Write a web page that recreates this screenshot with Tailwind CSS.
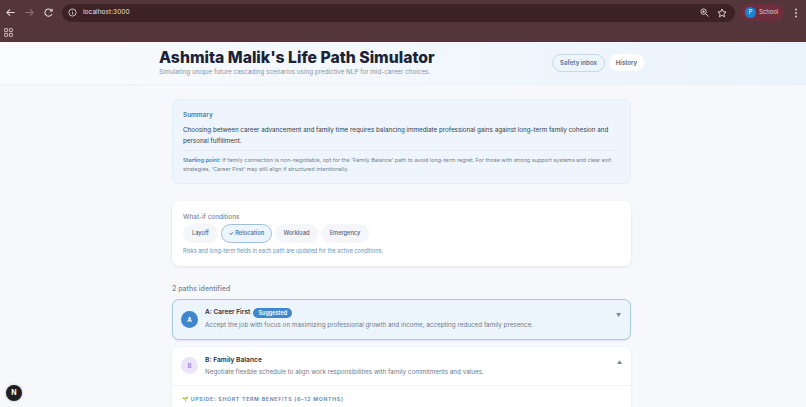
<!DOCTYPE html>
<html lang="en">
<head>
    <meta charset="UTF-8">
    <meta name="viewport" content="width=device-width, initial-scale=1.0">
    <title>Life Path Simulator</title>
    <script src="https://cdn.jsdelivr.net/npm/@tailwindcss/browser@4"></script>
</head>
<body class="w-[806px] h-[407px] overflow-hidden bg-[#f6f8fb] font-['Inter',sans-serif] relative">
    <!-- browser chrome -->
    <div class="h-[42px] bg-[#54363a] flex flex-col">
        <div class="h-[25px] flex items-center">
            <div class="w-[62px] pl-[5px] flex items-center gap-[8px] shrink-0">
                <svg class="w-[11px] h-[11px]" viewBox="0 0 12 12" fill="none" stroke="#e8dcdd" stroke-width="1.1"><path d="M10.5 6H2M5.5 2.5 2 6l3.500 3.500"/></svg>
                <svg class="w-[11px] h-[11px]" viewBox="0 0 12 12" fill="none" stroke="#8d7477" stroke-width="1.1"><path d="M1.500 6H10M6.500 2.500 10 6l-3.500 3.500"/></svg>
                <svg class="w-[11px] h-[11px]" viewBox="0 0 12 12" fill="none" stroke="#e8dcdd" stroke-width="1.1"><path d="M9.800 7.500A4 4 0 1 1 9.500 4M10 1.800V4.300H7.500"/></svg>
            </div>
            <div class="w-[673px] h-[18px] rounded-full bg-[#3d2225] flex items-center shrink-0 pl-[5px] pr-[8px]">
                <svg class="w-[9px] h-[9px] ml-[1px]" viewBox="0 0 10 10" fill="none" stroke="#e8dcdd" stroke-width=".9"><circle cx="5" cy="5" r="4"/><path d="M5 4.500V7.200M5 2.800v.8"/></svg>
                <span class="ml-[6px] text-[6.600px] text-[#e8dcdd]">localhost:3000</span>
                <svg class="w-[9px] h-[9px] ml-auto" viewBox="0 0 10 10" fill="none" stroke="#e8dcdd" stroke-width="1"><circle cx="4" cy="4" r="3"/><path d="M6.200 6.200 9.500 9.500M2.600 4h2.800M4 2.600v2.800"/></svg>
                <svg class="w-[10px] h-[10px] ml-[8px]" viewBox="0 0 10 10" fill="none" stroke="#e8dcdd" stroke-width=".9"><path d="m5 1 1.200 2.700 2.900.3-2.200 1.900.7 2.900L5 7.300 2.400 8.800l.7-2.900L.9 4l2.900-.3z"/></svg>
            </div>
            <div class="ml-[5px] w-[44px] h-[17px] rounded-full bg-[#6f2e3d] flex items-center pl-[5px] gap-[3px] shrink-0">
                <span class="w-[11px] h-[11px] rounded-full bg-[#1b82cf] text-white text-[5.500px] flex items-center justify-center">P</span>
                <span class="text-[5.900px] text-[#e3d3d6]">School</span>
            </div>
            <svg class="w-[8px] h-[10px] ml-[8px] shrink-0" viewBox="0 0 8 10" fill="#e8dcdd"><circle cx="4" cy="1.500" r=".9"/><circle cx="4" cy="5" r=".9"/><circle cx="4" cy="8.500" r=".9"/></svg>
        </div>
        <div class="pl-[4px] pt-[3px]">
            <svg class="w-[9px] h-[9px]" viewBox="0 0 9 9" fill="none" stroke="#d9c9cb" stroke-width=".9"><rect x=".6" y=".6" width="3" height="3" rx=".5"/><rect x="5.400" y=".6" width="3" height="3" rx=".5"/><rect x=".6" y="5.400" width="3" height="3" rx=".5"/><rect x="5.400" y="5.400" width="3" height="3" rx=".5"/></svg>
        </div>
    </div>

    <!-- page header -->
    <header class="h-[43px] bg-gradient-to-r from-[#fafbfd] to-[#eaf3fc] border-b border-[#edf0f5] flex items-center pl-[159px] pr-[162px] justify-between">
        <div class="-mt-[2px]">
            <h1 class="font-extrabold text-[15.750px] leading-[20px] text-[#1b2336]">Ashmita Malik's Life Path Simulator</h1>
            <p class="text-[6.320px] leading-[9px] text-[#8a93a3]">Simulating unique future cascading scenarios using predictive NLP for mid-career choices.</p>
        </div>
        <div class="flex items-center gap-[4px] -mt-[1px]">
            <button class="h-[18px] w-[53px] rounded-full border border-[#c5d9ea] text-[6.100px] font-semibold text-[#4f7397] bg-[#edf5fc]">Safety inbox</button>
            <button class="h-[17px] w-[35px] rounded-full bg-white text-[6.100px] font-semibold text-[#5f6673]">History</button>
        </div>
    </header>

    <main class="w-[459px] ml-[172px] pt-[14px] flex flex-col">
        <!-- summary -->
        <section class="h-[85px] rounded-[7px] bg-[#eef5fc] border border-[#e4eef8] px-[10px] pt-[11px]">
            <h2 class="text-[6.400px] leading-[9px] font-semibold text-[#4d79ac]">Summary</h2>
            <p class="mt-[5px] text-[6.280px] leading-[10.500px] text-[#333a48]">Choosing between career advancement and family time requires balancing immediate professional gains against long-term family cohesion and personal fulfillment.</p>
            <div class="mt-[4px] border-t border-[#e3ebf4] pt-[5px] text-[5.470px] leading-[9.300px] text-[#747d8b]">
                <b class="font-semibold text-[#4d79ac]">Starting point:</b> If family connection is non-negotiable, opt for the 'Family Balance' path to avoid long-term regret. For those with strong support systems and clear exit strategies, 'Career First' may still align if structured intentionally.
            </div>
        </section>

        <!-- what-if -->
        <section class="mt-[17px] h-[65px] rounded-[7px] bg-white shadow-[0_1px_3px_rgba(30,50,90,.1)] px-[11px] pt-[12px]">
            <h2 class="text-[6.400px] leading-[9px] font-medium text-[#7d8593]">What-if conditions</h2>
            <div class="mt-[2px] flex items-center gap-[3px]">
                <span class="h-[19px] w-[35px] rounded-full bg-[#f4f6fa] text-[5.700px] font-medium text-[#5a6270] flex items-center justify-center">Layoff</span>
                <span class="h-[19px] w-[51px] rounded-full bg-[#edf5fc] border border-[#9fc0d8] text-[5.700px] font-semibold text-[#4d79ac] flex items-center justify-center">✓ Relocation</span>
                <span class="h-[19px] w-[43px] rounded-full bg-[#f4f6fa] text-[5.700px] font-medium text-[#5a6270] flex items-center justify-center">Workload</span>
                <span class="h-[19px] w-[48px] rounded-full bg-[#f4f6fa] text-[5.700px] font-medium text-[#5a6270] flex items-center justify-center">Emergency</span>
            </div>
            <p class="mt-[4px] text-[5.500px] leading-[8px] text-[#6b94bb]">Risks and long-term fields in each path are updated for the active conditions.</p>
        </section>

        <p class="mt-[18px] text-[7px] leading-[9px] font-medium text-[#7d8593]">2 paths identified</p>

        <!-- path A -->
        <article class="mt-[5.500px] h-[41px] rounded-[7px] bg-[#edf5fc] border border-[#a9cadb] shadow-[0_1px_2px_rgba(30,70,110,.12)] flex items-center pl-[8px] pr-[9px]">
            <span class="w-[17px] h-[17px] rounded-full bg-[#3f86cf] text-white text-[6px] font-bold flex items-center justify-center shrink-0">A</span>
            <div class="ml-[7px]">
                <div class="flex items-center gap-[3px]">
                    <h3 class="text-[6.500px] font-semibold text-[#2b3240]">A: Career First</h3>
                    <span class="h-[10px] w-[39px] rounded-full bg-[#3f86cf] text-white text-[5.500px] font-semibold flex items-center justify-center">Suggested</span>
                </div>
                <p class="mt-[3px] text-[6.300px] leading-[9px] text-[#707988]">Accept the job with focus on maximizing professional growth and income, accepting reduced family presence.</p>
            </div>
            <span class="ml-auto -mt-[7px] text-[5px] text-[#7a8290]">▼</span>
        </article>

        <!-- path B -->
        <article class="mt-[7px] h-[80px] rounded-t-[7px] bg-white shadow-[0_1px_3px_rgba(30,50,90,.08)]">
            <div class="h-[39px] border-b border-[#f0f2f6] flex items-center pl-[9px] pr-[9px]">
                <span class="w-[17px] h-[17px] rounded-full bg-[#ece4fa] text-[#a68ce6] text-[6px] font-bold flex items-center justify-center shrink-0">B</span>
                <div class="ml-[7px] mt-[1px]">
                    <h3 class="text-[6.700px] leading-[10px] font-semibold text-[#2b3240]">B: Family Balance</h3>
                    <p class="mt-[3px] text-[6.300px] leading-[9px] text-[#707988]">Negotiate flexible schedule to align work responsibilities with family commitments and values.</p>
                </div>
                <span class="ml-auto -mt-[5px] text-[5px] text-[#7a8290]">▲</span>
            </div>
            <p class="pl-[10px] pt-[9px] text-[5.200px] leading-[8px] font-semibold tracking-[.72px] text-[#5583b0]">🌱 UPSIDE: SHORT TERM BENEFITS (6–12 MONTHS)</p>
        </article>
    </main>

    <!-- next dev badge -->
    <div class="absolute left-[6px] bottom-[6px] w-[16px] h-[16px] rounded-full bg-[#1f1f22] text-white text-[7px] font-bold flex items-center justify-center shadow-[0_0_3px_rgba(0,0,0,.25)]">N</div>
</body>
</html>
